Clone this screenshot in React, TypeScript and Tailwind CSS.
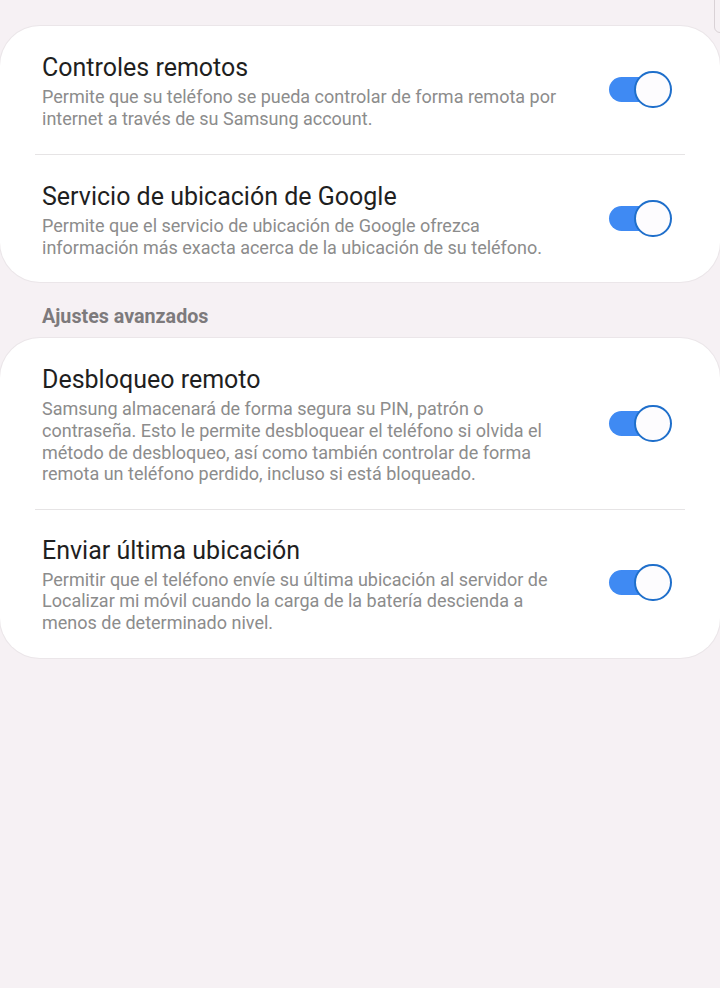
import { useState } from 'react';

type Item = {
  title: string;
  desc: string;
  pt: string;
  pb: string;
};

const general: Item[] = [
  {
    title: 'Controles remotos',
    desc: 'Permite que su teléfono se pueda controlar de forma remota por internet a través de su Samsung account.',
    pt: 'pt-[27px]',
    pb: 'pb-[25px]',
  },
  {
    title: 'Servicio de ubicación de Google',
    desc: 'Permite que el servicio de ubicación de Google ofrezca información más exacta acerca de la ubicación de su teléfono.',
    pt: 'pt-[27px]',
    pb: 'pb-[24px]',
  },
];

const advanced: Item[] = [
  {
    title: 'Desbloqueo remoto',
    desc: 'Samsung almacenará de forma segura su PIN, patrón o contraseña. Esto le permite desbloquear el teléfono si olvida el método de desbloqueo, así como también controlar de forma remota un teléfono perdido, incluso si está bloqueado.',
    pt: 'pt-[27px]',
    pb: 'pb-[24px]',
  },
  {
    title: 'Enviar última ubicación',
    desc: 'Permitir que el teléfono envíe su última ubicación al servidor de Localizar mi móvil cuando la carga de la batería descienda a menos de determinado nivel.',
    pt: 'pt-[26px]',
    pb: 'pb-[24px]',
  },
];

function Toggle({ on, onChange }: { on: boolean; onChange: () => void }) {
  return (
    <button
      type="button"
      onClick={onChange}
      className="relative -mt-[4px] w-[64px] h-[37px] shrink-0"
    >
      <span
        className={`absolute left-[1px] top-[6px] h-[25px] w-[48px] rounded-full ${
          on ? 'bg-[#3f8af3]' : 'bg-[#c9c9c9]'
        }`}
      />
      <span
        className={`absolute top-0 h-[37px] w-[38px] rounded-full bg-[#fdfcfe] border-2 ${
          on ? 'right-0 border-[#1f6fcb]' : 'left-0 border-[#9a9a9a]'
        }`}
      />
    </button>
  );
}

function Row({ item, last }: { item: Item; last: boolean }) {
  const [on, setOn] = useState(true);

  return (
    <>
      <div className={`flex items-center pl-[42px] pr-[48px] ${item.pt} ${item.pb}`}>
        <div className="w-[528px] shrink-0">
          <p className="text-[25px] leading-[30px] text-[#1f1f1f]">{item.title}</p>
          <p className="mt-[3px] text-[18px] leading-[21.6px] text-[#8c8c8c]">{item.desc}</p>
        </div>
        <div className="flex-1" />
        <Toggle on={on} onChange={() => setOn(!on)} />
      </div>
      {!last && <div className="mx-[35px] h-px bg-[#e6e4e5]" />}
    </>
  );
}

export default function App() {
  return (
    <div className="relative min-h-[988px] w-[720px] overflow-hidden bg-[#f6f1f4] pt-[26px] font-['Roboto','Liberation_Sans',sans-serif]">
      <div className="absolute right-[-8px] top-[-8px] h-[41px] w-[14px] rounded-bl-[6px] border border-[#d9d2d6]" />

      <div className="rounded-[40px] bg-white ring-1 ring-[#ebe6e9]">
        {general.map((it, i) => (
          <Row key={it.title} item={it} last={i === general.length - 1} />
        ))}
      </div>

      <p className="mt-[23px] mb-[9px] pl-[42px] text-[19.7px] leading-[24px] font-bold text-[#7d7a7c]">
        Ajustes avanzados
      </p>

      <div className="rounded-[40px] bg-white ring-1 ring-[#ebe6e9]">
        {advanced.map((it, i) => (
          <Row key={it.title} item={it} last={i === advanced.length - 1} />
        ))}
      </div>
    </div>
  );
}
